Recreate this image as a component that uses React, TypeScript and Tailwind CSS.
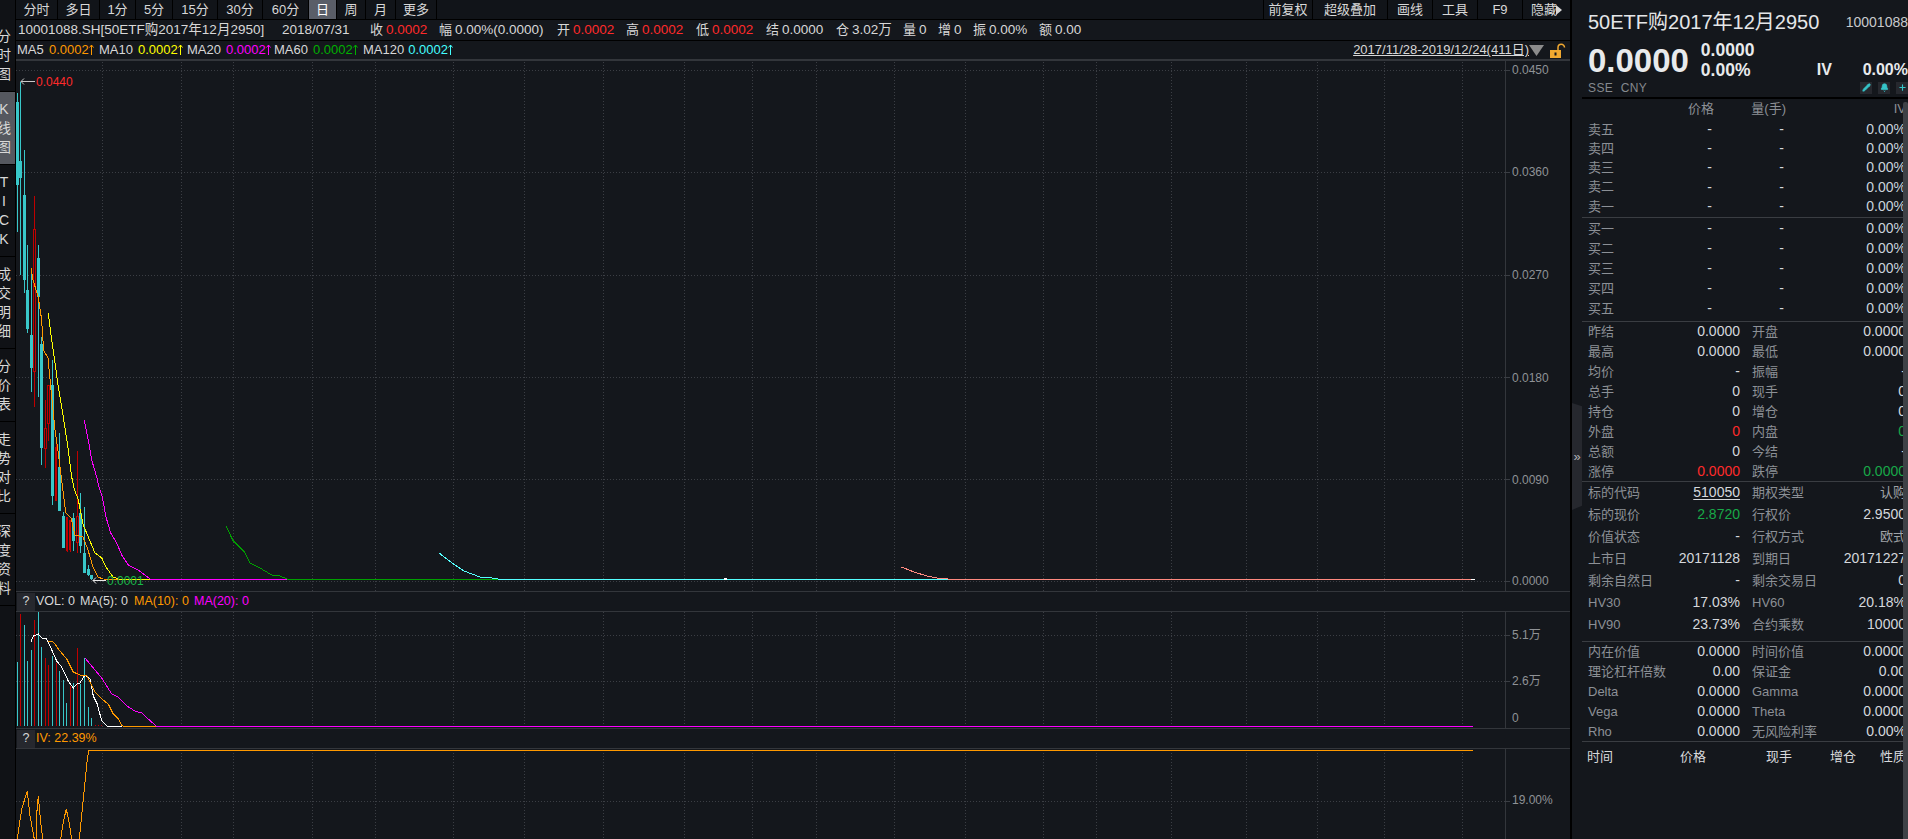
import React from "react";
import { Pencil, Bell, Plus } from "lucide-react";

const vx = [102, 181, 233, 312, 375, 453, 524, 603, 684, 752, 816, 894, 965, 1043, 1096, 1171, 1246, 1317, 1384, 1462];

type C = { x: number; w: number; t: number; b: number; wt: number; wb: number; k: "c" | "r" };
const candles: C[] = [
  { x: 16, w: 3, t: 102, b: 185, wt: 93, wb: 232, k: "c" },
  { x: 19, w: 3, t: 161, b: 178, wt: 82, wb: 275, k: "c" },
  { x: 23, w: 3, t: 195, b: 280, wt: 150, wb: 293, k: "c" },
  { x: 26, w: 3, t: 290, b: 329, wt: 245, wb: 333, k: "c" },
  { x: 30, w: 3, t: 335, b: 368, wt: 270, wb: 392, k: "c" },
  { x: 33, w: 3, t: 229, b: 371, wt: 196, wb: 407, k: "r" },
  { x: 37, w: 3, t: 258, b: 297, wt: 245, wb: 397, k: "c" },
  { x: 40, w: 3, t: 344, b: 448, wt: 337, wb: 465, k: "c" },
  { x: 44, w: 3, t: 428, b: 448, wt: 400, wb: 468, k: "r" },
  { x: 47, w: 3, t: 385, b: 423, wt: 385, wb: 441, k: "r" },
  { x: 51, w: 3, t: 385, b: 496, wt: 360, wb: 505, k: "c" },
  { x: 55, w: 2, t: 447, b: 500, wt: 438, wb: 500, k: "r" },
  { x: 58, w: 3, t: 467, b: 511, wt: 433, wb: 511, k: "c" },
  { x: 62, w: 3, t: 516, b: 548, wt: 512, wb: 548, k: "c" },
  { x: 66, w: 2, t: 517, b: 550, wt: 517, wb: 552, k: "r" },
  { x: 69, w: 2, t: 520, b: 549, wt: 520, wb: 552, k: "r" },
  { x: 72, w: 3, t: 518, b: 541, wt: 513, wb: 551, k: "c" },
  { x: 76, w: 3, t: 516, b: 542, wt: 451, wb: 553, k: "r" },
  { x: 79, w: 3, t: 513, b: 546, wt: 493, wb: 553, k: "c" },
  { x: 83, w: 3, t: 553, b: 573, wt: 507, wb: 573, k: "c" },
  { x: 87, w: 3, t: 569, b: 575, wt: 565, wb: 576, k: "c" },
  { x: 90, w: 3, t: 575, b: 579, wt: 575, wb: 580, k: "c" },
];

const ma5 = "31,268 33,280 38,296 41.7,320 42.7,338 44,351 48,358 51.7,397 55,430 58.3,453 63.3,493 65.7,513 71,518 75,535 83,537 88,550 93,567 98,577 103,579 150,579.5";
const ma10 = "48.3,313 51.7,340 55,363 58.3,387 61.7,407 65,428 68.3,450 71.7,477 74,488 78.3,500 83.3,525 88.3,537 95,553 101.7,558 106.7,568 113,577 118.3,579 151,579.5";
const ma20 = "84.3,420 88.3,440 91.7,460 96.7,477 99.3,488 102.3,497 106,517 110.7,533 116.7,543 121.7,555 128.3,565 138.3,570 145,575 150.7,579.5 289,579.5";
const ma60 = "226,526 232.7,540 244.3,552 250,563 260,568 271.7,575 280,576 288.3,579.5 501,579.5";
const ma120 = "439,553 455,565 464,571 480,577 492,578 501,579.5 953,579.5";
const ma240 = "901.5,567 914,572 927,576 937,578 953,579.5 1472,579.5";

const bars: [number, number, "c" | "r"][] = [
  [17, 663, "c"], [20, 615, "r"], [24, 626, "c"], [27, 662, "c"], [31, 651, "c"], [34, 621, "r"], [38, 613, "c"], [41, 648, "c"],
  [45, 659, "r"], [48, 666, "r"], [52, 657, "c"], [56, 664, "r"], [59, 672, "c"], [63, 681, "c"], [66, 704, "c"], [70, 687, "r"],
  [73, 684, "c"], [77, 649, "r"], [80, 685, "c"], [84, 659, "c"], [88, 708, "c"], [91, 719, "c"], [95, 726, "r"], [98, 726, "r"], [101, 726, "r"],
];
const volW = "31,643 33.3,637 38.3,635 41.7,639 46.7,640 50,647 56.7,662 61.7,668 68.3,682 73.3,689 76.7,685 80,684 85,676 90,680 93.3,697 97.3,705 101.7,722 106.7,727 122,727.5";
const volO = "48.3,642 53.3,643 60,652 66.7,660 73.3,673 80,676 86.7,676 95,693 101.7,700 108.3,705 113.3,715 118.3,720 122.3,727 157,727.5";
const volM = "85,659 91.7,667 101.7,679 111.7,695 118.3,698 126.7,707 135,712 141.7,714 148.3,720 156.7,727.5 1473,727.5";
const iv1 = "17.3,840 21.7,810 27.3,792 30,817 34.3,840";
const iv2 = "36,840 36,823 38.3,797 40.7,823 42.7,840";
const iv3 = "60.7,840 63.3,823 66.3,810 69,823 71.7,840";
const iv4 = "79.3,840 82.3,810 85,783 87.3,760 88.7,751.5 1473,751.5";

function Grid({ y0, y1, hs }: { y0: number; y1: number; hs: number[] }) {
  return (
    <g stroke="#3b3e44" strokeWidth="1" strokeDasharray="1 2" shapeRendering="crispEdges">
      {vx.map((x) => (
        <line key={x} x1={x + 0.5} x2={x + 0.5} y1={y0} y2={y1} />
      ))}
      {hs.map((y) => (
        <line key={y} x1={16} x2={1505} y1={y + 0.5} y2={y + 0.5} />
      ))}
      {hs.map((y) => (
        <line key={"t" + y} x1={1505} x2={1510} y1={y + 0.5} y2={y + 0.5} strokeDasharray="none" />
      ))}
    </g>
  );
}

const Line = ({ p, c, w = 1 }: { p: string; c: string; w?: number }) => (
  <polyline points={p} fill="none" stroke={c} strokeWidth={w} shapeRendering="crispEdges" />
);

function AxisLabels({ items, top }: { items: [string, number][]; top: number }) {
  return (
    <>
      {items.map(([t, y]) => (
        <span key={t} className="absolute left-[6px] text-[12px] leading-[14px] text-[#8f9296]" style={{ top: y - top - 7 }}>
          {t}
        </span>
      ))}
    </>
  );
}

function Tool({ w, t, active, left }: { w: string; t: string; active?: boolean; left?: boolean }) {
  return (
    <div className={`${w} h-[19px] flex items-center justify-center border-r border-[#000000] text-[13px] ${active ? "bg-[#5a5e68] text-white" : "text-[#d8d8d8]"} ${left ? "border-l" : ""}`}>
      {t}
    </div>
  );
}

function Pair({ w, l, v, c = "text-[#d8d8d8]" }: { w: string; l: string; v: string; c?: string }) {
  return (
    <div className={`${w} flex items-center gap-[3px]`}>
      <span className="text-[13px] text-[#d8d8d8]">{l}</span>
      <span className={c}>{v}</span>
    </div>
  );
}

function Ma({ w, lw, l, v, c, stroke }: { w: string; lw: string; l: string; v: string; c: string; stroke: string }) {
  return (
    <div className={`${w} flex items-center`}>
      <span className={`${lw} text-[#d8d8d8]`}>{l}</span>
      <span className={c}>{v}</span>
      <svg width="5" height="12" viewBox="0 0 5 12" className="shrink-0">
        <path d="M2.5 1 V11 M0.5 3.5 L2.5 1 L4.5 3.5" fill="none" stroke={stroke} strokeWidth="1" />
      </svg>
    </div>
  );
}

function Side({ chars, active, h }: { chars: string[]; active?: boolean; h: string }) {
  return (
    <div className={`${h} w-[15px] overflow-hidden border-b border-[#000000] flex flex-col justify-center ${active ? "bg-[#55585f]" : ""}`}>
      {chars.map((c, i) => (
        <span key={i} className="-ml-[3px] w-[14px] text-center text-[14px] leading-[19px] text-[#d8d8d8]">
          {c}
        </span>
      ))}
    </div>
  );
}

const SubHead = ({ children }: { children: React.ReactNode }) => (
  <div className="h-[21px] shrink-0 flex items-center border-y border-[#33363b] text-[12.5px] pl-px">
    <div className="w-[18px] h-[18px] bg-[#26282e] flex items-center justify-center text-[#d8d8d8] mr-px">?</div>
    {children}
  </div>
);

const bookCols = "grid grid-cols-[106px_26px_72px_1fr] items-center";

function BookRow({ l, h }: { l: string; h: string }) {
  return (
    <div className={`${h} ${bookCols}`}>
      <span className="pl-[6px] text-[13px] text-[#8c9096]">{l}</span>
      <span className="text-right text-[#d5d8dc] pr-[2px]">-</span>
      <span className="text-right text-[#d5d8dc] pr-[2px]">-</span>
      <span className="text-right text-[#c9d3dc]">0.00%</span>
    </div>
  );
}

function Row({ a, b, c, d, h = "h-[20px]", bc = "text-[#d5d8dc]", dc = "text-[#d5d8dc]", u }: { a: string; b: string; c: string; d: string; h?: string; bc?: string; dc?: string; u?: boolean }) {
  return (
    <div className={`${h} flex items-center`}>
      <div className="w-[158px] pl-[6px] flex items-center justify-between">
        <span className="text-[13px] text-[#8c9096]">{a}</span>
        <span className={`${bc} ${u ? "underline underline-offset-2" : ""}`}>{b}</span>
      </div>
      <div className="flex-1 ml-[12px] flex items-center justify-between">
        <span className="text-[13px] text-[#8c9096]">{c}</span>
        <span className={dc}>{d}</span>
      </div>
    </div>
  );
}

const Rule = ({ neg }: { neg?: boolean }) => <div className={`h-px bg-[#3a3d42] ${neg ? "-mt-px" : ""}`} />;

export default function App() {
  return (
    <div className="flex w-[1908px] h-[839px] overflow-hidden bg-[#14171c] text-[14px] font-['Liberation_Sans','Noto_Sans_CJK_SC',sans-serif]">
      {/* left tabs */}
      <div className="w-[15px] shrink-0 flex flex-col bg-[#101216] pt-[19px]">
        <Side h="h-[73px]" chars={["分", "时", "图"]} />
        <Side h="h-[73px]" active chars={["K", "线", "图"]} />
        <Side h="h-[92px]" chars={["T", "I", "C", "K"]} />
        <Side h="h-[92px]" chars={["成", "交", "明", "细"]} />
        <Side h="h-[73px]" chars={["分", "价", "表"]} />
        <Side h="h-[92px]" chars={["走", "势", "对", "比"]} />
        <Side h="h-[92px]" chars={["深", "度", "资", "料"]} />
      </div>

      {/* centre */}
      <div className="w-[1555px] shrink-0 flex flex-col border-l border-[#000000]">
        {/* toolbar */}
        <div className="h-[20px] shrink-0 flex items-start bg-[#111419] border-b border-[#000000]">
          <Tool w="w-[42px]" t="分时" />
          <Tool w="w-[42px]" t="多日" />
          <Tool w="w-[36px]" t="1分" />
          <Tool w="w-[37px]" t="5分" />
          <Tool w="w-[45px]" t="15分" />
          <Tool w="w-[45px]" t="30分" />
          <Tool w="w-[46px]" t="60分" />
          <Tool w="w-[28px]" t="日" active />
          <Tool w="w-[29px]" t="周" />
          <Tool w="w-[30px]" t="月" />
          <Tool w="w-[41px]" t="更多" />
          <div className="flex-1" />
          <Tool w="w-[50px]" t="前复权" left />
          <Tool w="w-[75px]" t="超级叠加" />
          <Tool w="w-[45px]" t="画线" />
          <Tool w="w-[45px]" t="工具" />
          <Tool w="w-[45px]" t="F9" />
          <div className="w-[47px] h-[19px] flex items-center justify-center text-[13px] text-[#d8d8d8] gap-px overflow-hidden">
            隐藏
            <svg width="6" height="10" viewBox="0 0 6 10" className="-ml-[2px]">
              <polygon points="0,0 6,5 0,10" fill="#d8d8d8" />
            </svg>
          </div>
        </div>

        {/* quote info */}
        <div className="h-[21px] shrink-0 flex items-center pl-[2px] border-b border-[#000000] text-[#d8d8d8] text-[13.5px]">
          <span className="w-[264px] whitespace-nowrap">10001088.SH[50ETF购2017年12月2950]</span>
          <span className="w-[88px]">2018/07/31</span>
          <Pair w="w-[69px]" l="收" v="0.0002" c="text-[#ff2a2a]" />
          <Pair w="w-[118px]" l="幅" v="0.00%(0.0000)" />
          <Pair w="w-[69px]" l="开" v="0.0002" c="text-[#ff2a2a]" />
          <Pair w="w-[70px]" l="高" v="0.0002" c="text-[#ff2a2a]" />
          <Pair w="w-[70px]" l="低" v="0.0002" c="text-[#ff2a2a]" />
          <Pair w="w-[70px]" l="结" v="0.0000" />
          <Pair w="w-[67px]" l="仓" v="3.02万" />
          <Pair w="w-[35px]" l="量" v="0" />
          <Pair w="w-[35px]" l="增" v="0" />
          <Pair w="w-[66px]" l="振" v="0.00%" />
          <Pair w="w-[60px]" l="额" v="0.00" />
        </div>

        {/* MA row */}
        <div className="h-[20px] shrink-0 flex items-center pl-px border-b-2 border-[#33363b] text-[13px]">
          <Ma w="w-[82px]" lw="w-[32px]" l="MA5" v="0.0002" c="text-[#ff9900]" stroke="#ff9900" />
          <Ma w="w-[88px]" lw="w-[39px]" l="MA10" v="0.0002" c="text-[#ffff00]" stroke="#ffff00" />
          <Ma w="w-[87px]" lw="w-[39px]" l="MA20" v="0.0002" c="text-[#ff00ff]" stroke="#ff00ff" />
          <Ma w="w-[89px]" lw="w-[39px]" l="MA60" v="0.0002" c="text-[#00b000]" stroke="#00b000" />
          <Ma w="w-[90px]" lw="w-[47px]" l="MA120" v="0.0002" c="text-[#44ffff]" stroke="#44ffff" />
          <div className="flex-1" />
          <span className="text-[#d8d8d8] underline underline-offset-1">2017/11/28-2019/12/24(411日)</span>
          <svg width="41" height="19" viewBox="0 0 41 19" className="shrink-0">
            <polygon points="0,4 15,4 7.5,15" fill="#8c8c8c" />
            <rect x="21" y="9" width="11" height="8" fill="#f0a830" />
            <rect x="25.5" y="11.5" width="2" height="3" fill="#14171c" />
            <path d="M29 9 V6.5 A3 3 0 0 1 35.5 6.5" fill="none" stroke="#f0a830" strokeWidth="1.5" />
          </svg>
        </div>

        {/* main chart */}
        <div className="relative h-[530px] shrink-0 flex">
          <div className="flex-1" />
          <div className="relative w-[65px] border-l border-[#33363b]">
            <AxisLabels
              top={61}
              items={[
                ["0.0450", 70],
                ["0.0360", 172],
                ["0.0270", 275],
                ["0.0180", 378],
                ["0.0090", 480],
                ["0.0000", 581],
              ]}
            />
          </div>
          <svg className="absolute inset-0 w-full h-full" viewBox="16 61 1554 530">
            <Grid y0={62} y1={591} hs={[70, 172, 275, 377, 479, 581]} />
            <g shapeRendering="crispEdges">
              {candles.map((k, i) => {
                const col = k.k === "c" ? "#39c7c9" : "#c00000";
                const mid = k.x + Math.floor(k.w / 2) + 0.5;
                return (
                  <g key={i}>
                    <line x1={mid} x2={mid} y1={k.wt} y2={k.wb} stroke={col} />
                    {k.k === "c" ? (
                      <rect x={k.x} y={k.t} width={k.w} height={k.b - k.t} fill={col} />
                    ) : (
                      <rect x={k.x + 0.5} y={k.t + 0.5} width={k.w - 1} height={k.b - k.t} fill="#14171c" stroke={col} />
                    )}
                  </g>
                );
              })}
            </g>
            <Line p={ma5} c="#ff9900" />
            <Line p={ma10} c="#ffff00" />
            <Line p={ma20} c="#ff00ff" />
            <Line p={ma60} c="#00a000" />
            <Line p={ma120} c="#55ffff" />
            <Line p={ma240} c="#ff8a80" />
            <line x1="1471" x2="1475" y1="579.5" y2="579.5" stroke="#ffffff" />
            <rect x="724" y="578" width="3" height="2" fill="#ffffff" />
            <path d="M35 81.5 H21 M24 78.5 L21 81.5 L24 84.5" fill="none" stroke="#c8c8c8" />
            <path d="M106 580.5 H93 M96 577.5 L93 580.5 L96 583.5" fill="none" stroke="#e8e8e8" />
          </svg>
          <span className="absolute text-[12px] leading-[14px] text-[#ff2a2a]" style={{ left: 20, top: 14 }}>
            0.0440
          </span>
          <span className="absolute text-[12px] leading-[14px] text-[#18b848]" style={{ left: 91, top: 513 }}>
            0.0001
          </span>
        </div>

        <SubHead>
          <span className="w-[44px] text-[#d8d8d8]">VOL: 0</span>
          <span className="w-[54px] text-[#d8d8d8]">MA(5): 0</span>
          <span className="w-[60px] text-[#ff9900]">MA(10): 0</span>
          <span className="text-[#ff00ff]">MA(20): 0</span>
        </SubHead>

        {/* volume */}
        <div className="relative h-[116px] shrink-0 flex">
          <div className="flex-1" />
          <div className="relative w-[65px] border-l border-[#33363b]">
            <AxisLabels
              top={613}
              items={[
                ["5.1万", 636],
                ["2.6万", 682],
                ["0", 719],
              ]}
            />
          </div>
          <svg className="absolute inset-0 w-full h-full" viewBox="16 613 1554 116">
            <Grid y0={613} y1={729} hs={[636, 682]} />
            <g shapeRendering="crispEdges">
              {bars.map(([x, t, k]) => (
                <line key={x} x1={x + 0.5} x2={x + 0.5} y1={t} y2={727} stroke={k === "c" ? "#39c7c9" : "#c00000"} />
              ))}
            </g>
            <Line p={volW} c="#ffffff" />
            <Line p={volO} c="#ff9900" />
            <Line p={volM} c="#ff00ff" />
          </svg>
        </div>

        <SubHead>
          <span className="text-[#ff9900]">IV: 22.39%</span>
        </SubHead>

        {/* IV */}
        <div className="relative flex-1 flex overflow-hidden">
          <div className="flex-1" />
          <div className="relative w-[65px] border-l border-[#33363b]">
            <AxisLabels top={751} items={[["19.00%", 802]]} />
          </div>
          <svg className="absolute inset-0 w-full h-full" viewBox="16 751 1554 88">
            <Grid y0={751} y1={839} hs={[802]} />
            <Line p={iv1} c="#ff9900" />
            <Line p={iv2} c="#ff9900" />
            <Line p={iv3} c="#ff9900" />
            <Line p={iv4} c="#ff9900" />
          </svg>
        </div>
      </div>

      {/* split */}
      <div className="w-[2px] shrink-0 bg-[#000000]" />

      {/* right panel */}
      <div className="relative flex-1 flex min-w-0">
        <div className="absolute left-0 top-[403px] w-[10px] h-[107px] bg-[#26282e] [clip-path:polygon(0_0,100%_3%,100%_96%,0_100%)] flex items-center justify-center text-[13px] leading-none text-[#b0b3b8]">
          »
        </div>
        <div className="w-[10px] shrink-0" />
        <div className="flex-1 min-w-0 flex flex-col">
          {/* header */}
          <div className="h-[99px] shrink-0 pl-[6px] flex flex-col border-b-2 border-[#000000]">
            <div className="h-[40px] pt-[4px] flex items-center justify-between whitespace-nowrap text-[#e4e6e8]">
              <span className="text-[20px]">50ETF购2017年12月2950</span>
              <span className="text-[14px] text-[#c8cacc]">10001088</span>
            </div>
            <div className="h-[40px] flex items-center font-bold text-[#e8eaec]">
              <span className="text-[33px] leading-none w-[113px]">0.0000</span>
              <div className="w-[116px] flex flex-col text-[17.5px] leading-[20px]">
                <span>0.0000</span>
                <span>0.00%</span>
              </div>
              <span className="text-[16px] mt-[20px] w-[46px]">IV</span>
              <span className="text-[16px] mt-[20px]">0.00%</span>
            </div>
            <div className="h-[15px] flex items-center justify-between">
              <span className="text-[12px] text-[#85898e] tracking-[0.4px]">SSE&nbsp;&nbsp;CNY</span>
              <div className="flex gap-[6px]">
                <span className="w-[12px] h-[12px] bg-[#26282e] flex items-center justify-center">
                  <Pencil size={9} className="text-[#35c4c8]" fill="#35c4c8" />
                </span>
                <span className="w-[12px] h-[12px] bg-[#26282e] flex items-center justify-center">
                  <Bell size={9} className="text-[#35c4c8]" fill="#35c4c8" />
                </span>
                <span className="w-[12px] h-[12px] bg-[#26282e] flex items-center justify-center">
                  <Plus size={9} className="text-[#35c4c8]" strokeWidth={3} />
                </span>
              </div>
            </div>
          </div>

          {/* scrolling body */}
          <div className="flex-1 flex min-h-0">
            <div className="w-[321px] shrink-0 overflow-hidden">
              <div className="w-[324px]">
                <div className={`h-[20px] ${bookCols} text-[13px] text-[#8c9096]`}>
                  <span />
                  <span className="text-right">价格</span>
                  <span className="text-right">量(手)</span>
                  <span className="text-right">IV</span>
                </div>
                <BookRow h="h-[19.2px]" l="卖五" />
                <BookRow h="h-[19.2px]" l="卖四" />
                <BookRow h="h-[19.2px]" l="卖三" />
                <BookRow h="h-[19.2px]" l="卖二" />
                <BookRow h="h-[19.2px]" l="卖一" />
                <div className="h-[2px]" />
                <Rule />
                <BookRow h="h-[20px]" l="买一" />
                <BookRow h="h-[20px]" l="买二" />
                <BookRow h="h-[20px]" l="买三" />
                <BookRow h="h-[20px]" l="买四" />
                <BookRow h="h-[20px]" l="买五" />
                <div className="h-[3px]" />
                <Rule />
                <Row a="昨结" b="0.0000" c="开盘" d="0.0000" />
                <Row a="最高" b="0.0000" c="最低" d="0.0000" />
                <Row a="均价" b="-" c="振幅" d="-" />
                <Row a="总手" b="0" c="现手" d="0" />
                <Row a="持仓" b="0" c="增仓" d="0" />
                <Row a="外盘" b="0" bc="text-[#ff2a2a]" c="内盘" d="0" dc="text-[#18a848]" />
                <Row a="总额" b="0" c="今结" d="-" />
                <Row a="涨停" b="0.0000" bc="text-[#ff2a2a]" c="跌停" d="0.0000" dc="text-[#18a848]" />
                <Rule neg />
                <Row h="h-[22px]" a="标的代码" b="510050" u c="期权类型" d="认购" dc="text-[13px] text-[#a0a4a8]" />
                <Row h="h-[22px]" a="标的现价" b="2.8720" bc="text-[#18a848]" c="行权价" d="2.9500" />
                <Row h="h-[22px]" a="价值状态" b="-" c="行权方式" d="欧式" dc="text-[13px] text-[#a0a4a8]" />
                <Row h="h-[22px]" a="上市日" b="20171128" c="到期日" d="20171227" />
                <Row h="h-[22px]" a="剩余自然日" b="-" c="剩余交易日" d="0" />
                <Row h="h-[22px]" a="HV30" b="17.03%" c="HV60" d="20.18%" />
                <Row h="h-[22px]" a="HV90" b="23.73%" c="合约乘数" d="10000" />
                <div className="h-[5px]" />
                <Rule />
                <Row a="内在价值" b="0.0000" c="时间价值" d="0.0000" />
                <Row a="理论杠杆倍数" b="0.00" c="保证金" d="0.00" />
                <Row a="Delta" b="0.0000" c="Gamma" d="0.0000" />
                <Row a="Vega" b="0.0000" c="Theta" d="0.0000" />
                <Row a="Rho" b="0.0000" c="无风险利率" d="0.00%" />
                <Rule neg />
                <div className="h-[30px] flex items-center pl-[5px] text-[13px] text-[#d8dadc] whitespace-nowrap">
                  <span className="w-[93px]">时间</span>
                  <span className="w-[86px]">价格</span>
                  <span className="w-[64px]">现手</span>
                  <span className="w-[50px]">增仓</span>
                  <span>性质</span>
                </div>
              </div>
            </div>
            <div className="flex-1 mt-[3px] bg-[#3e4146] rounded-t-[2px]" />
          </div>
        </div>
      </div>
    </div>
  );
}
